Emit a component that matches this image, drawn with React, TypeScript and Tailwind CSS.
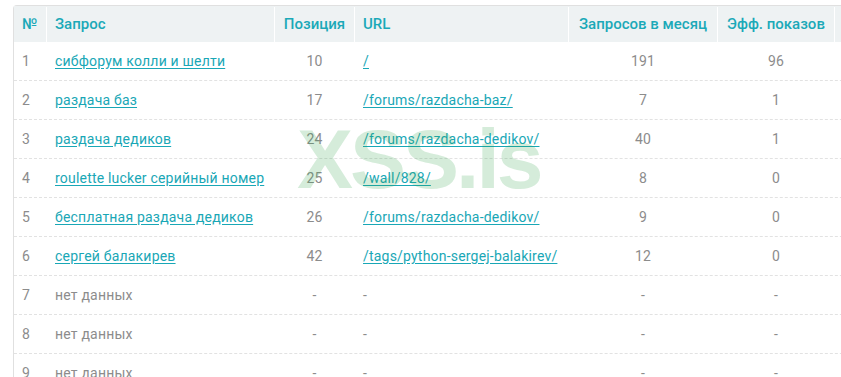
import React from 'react';

interface Row {
  n: number;
  query: string | null;
  pos: string;
  url: string | null;
  monthly: string;
  shows: string;
}

const rows: Row[] = [
  { n: 1, query: 'сибфорум колли и шелти', pos: '10', url: '/', monthly: '191', shows: '96' },
  { n: 2, query: 'раздача баз', pos: '17', url: '/forums/razdacha-baz/', monthly: '7', shows: '1' },
  { n: 3, query: 'раздача дедиков', pos: '24', url: '/forums/razdacha-dedikov/', monthly: '40', shows: '1' },
  { n: 4, query: 'roulette lucker серийный номер', pos: '25', url: '/wall/828/', monthly: '8', shows: '0' },
  { n: 5, query: 'бесплатная раздача дедиков', pos: '26', url: '/forums/razdacha-dedikov/', monthly: '9', shows: '0' },
  { n: 6, query: 'сергей балакирев', pos: '42', url: '/tags/python-sergej-balakirev/', monthly: '12', shows: '0' },
  { n: 7, query: null, pos: '-', url: null, monthly: '-', shows: '-' },
  { n: 8, query: null, pos: '-', url: null, monthly: '-', shows: '-' },
  { n: 9, query: null, pos: '-', url: null, monthly: '-', shows: '-' },
];

const gridCols = 'grid grid-cols-[32px_228px_80px_214px_149px_117px_120px]';

export default function App() {
  return (
    <div
      className="h-[377px] w-[841px] overflow-hidden bg-white pl-[13px] pt-[5px]"
      style={{ fontFamily: 'Roboto, "Noto Sans", sans-serif' }}
    >
      <div className="relative h-[400px] w-[960px] rounded-tl-[4px] border-l border-t border-[#e0e0e0]">
        {/* header */}
        <div className={`${gridCols} h-[36px] bg-[#eef2f3] pt-[1px] text-[15px] font-medium text-[#1ba9b8]`}>
          <div className="flex items-center pl-[8px]">№</div>
          <div className="flex items-center border-l border-white pl-[8px]">Запрос</div>
          <div className="flex items-center justify-center border-l border-white">Позиция</div>
          <div className="flex items-center border-l border-white pl-[8px]">URL</div>
          <div className="flex items-center justify-center border-l border-white">Запросов в месяц</div>
          <div className="flex items-center justify-center border-l border-white">Эфф. показов</div>
          <div className="border-l border-white" />
        </div>

        {rows.map((r) => (
          <div
            key={r.n}
            className={`${gridCols} h-[39px] border-b border-dashed border-[#e2e2e2] text-[14px] tracking-[0.2px] text-[#8c8c8c]`}
          >
            <div className="flex items-center pl-[8px]">{r.n}</div>
            <div className="flex items-center pl-[9px]">
              {r.query ? (
                <a href="#" className="text-[#19a7b6] underline underline-offset-[2px]">
                  {r.query}
                </a>
              ) : (
                'нет данных'
              )}
            </div>
            <div className="flex items-center justify-center pl-[1px]">{r.pos}</div>
            <div className="flex items-center pl-[9px]">
              {r.url ? (
                <a href="#" className="text-[#19a7b6] underline underline-offset-[2px]">
                  {r.url}
                </a>
              ) : (
                '-'
              )}
            </div>
            <div className="flex items-center justify-center pl-[1px]">{r.monthly}</div>
            <div className="flex items-center justify-center pl-[1px]">{r.shows}</div>
            <div />
          </div>
        ))}

        {/* watermark */}
        <div
          className="pointer-events-none absolute left-[283px] top-[111px] select-none text-[84px] font-bold leading-none tracking-[-3px] text-[#2e9e44]/20"
          style={{ fontFamily: '"Liberation Sans", Arial, sans-serif' }}
        >
          XSS.is
        </div>
      </div>
    </div>
  );
}
